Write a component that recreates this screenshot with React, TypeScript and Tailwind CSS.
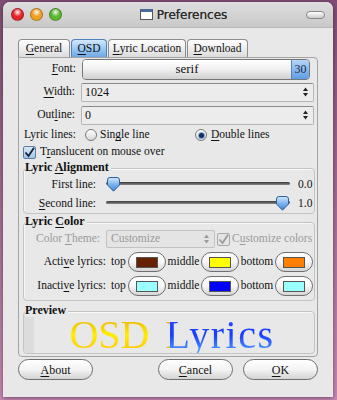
import React from 'react'

const serif = "font-['Liberation_Serif','DejaVu_Serif',serif]"

function U({ children }: { children: React.ReactNode }) {
  return <span className="underline underline-offset-2 decoration-1">{children}</span>
}

function SpinArrows({ color = '#222' }: { color?: string }) {
  return (
    <svg width="7" height="12" viewBox="0 0 7 12" className="shrink-0">
      <path d="M3.5 1.5 L6 5 H1 Z" fill={color} />
      <path d="M3.5 10.5 L6 7 H1 Z" fill={color} />
    </svg>
  )
}

function Entry({ value }: { value: string }) {
  return (
    <div className="flex items-center w-[233px] h-[19px] border border-[#b5b5b5] border-t-[#8a8a8a] rounded-[2px] bg-[#ececec] pl-[3px] pr-[4px]">
      <span className="flex-1 text-[12px] text-[#111]">{value}</span>
      <SpinArrows />
    </div>
  )
}

function Thumb() {
  return (
    <svg width="15" height="15" viewBox="0 0 15 15" className="shrink-0">
      <defs>
        <linearGradient id="thumbg" x1="0" y1="0" x2="0" y2="1">
          <stop offset="0" stopColor="#d4e8fc" />
          <stop offset="0.5" stopColor="#7db4ee" />
          <stop offset="1" stopColor="#3d86dc" />
        </linearGradient>
      </defs>
      <path d="M1.5 3 Q1.5 0.5 4 0.5 H11 Q13.5 0.5 13.5 3 V8 L7.5 14.2 L1.5 8 Z" fill="url(#thumbg)" stroke="#2f5f9a" strokeWidth="1" />
    </svg>
  )
}

function Slider({ pos }: { pos: 'start' | 'end' }) {
  return (
    <div className={`relative w-[184px] h-[15px] flex items-center ${pos === 'start' ? 'justify-start' : 'justify-end'}`}>
      <div className="absolute left-0 right-0 top-[5px] h-[3px] rounded-full bg-gradient-to-b from-[#3a3a3a] to-[#8a8a8a]" />
      <div className="relative">
        <Thumb />
      </div>
    </div>
  )
}

function ColorButton({ color }: { color: string }) {
  return (
    <div className="w-[38px] h-[20px] rounded-full border border-[#6f6f6f] bg-gradient-to-b from-white via-[#f6f6f6] to-[#d6d6d6] flex items-center justify-center shrink-0">
      <div className="w-[22px] h-[11px] border border-[#555]" style={{ backgroundColor: color }} />
    </div>
  )
}

function Radio({ checked }: { checked?: boolean }) {
  return (
    <div className="w-[12px] h-[12px] rounded-full border border-[#7a7a7a] bg-gradient-to-b from-white to-[#d8d8d8] flex items-center justify-center shrink-0">
      {checked && <div className="w-[5px] h-[5px] rounded-full bg-[#1a2f55] ring-1 ring-[#7aa8e0]" />}
    </div>
  )
}

function Check({ disabled }: { disabled?: boolean }) {
  return (
    <div
      className={`w-[13px] h-[13px] border rounded-[2px] flex items-center justify-center shrink-0 ${
        disabled ? 'border-[#a8a8a8] bg-[#e4e4e4]' : 'border-[#5e7c9e] bg-gradient-to-b from-[#d8e8f8] to-[#a3c4e6]'
      }`}
    >
      <svg width="11" height="11" viewBox="0 0 11 11">
        <path d="M1.5 5.5 L4.5 9 L10 0.8" fill="none" stroke={disabled ? '#9a9a9a' : '#10223a'} strokeWidth="1.8" />
      </svg>
    </div>
  )
}

function PillButton({ children }: { children: React.ReactNode }) {
  return (
    <div className="w-[75px] h-[21px] rounded-full border border-[#6e6e6e] bg-gradient-to-b from-white via-[#f4f4f4] to-[#d4d4d4] flex items-center justify-center text-[12px] text-[#111]">
      {children}
    </div>
  )
}

function Group({ label, children, className = '' }: { label: React.ReactNode; children: React.ReactNode; className?: string }) {
  return (
    <div className={`relative ${className}`}>
      <div className="border border-[#c4c4c4] rounded-[4px] shadow-[inset_1px_1px_0_#f8f8f8] h-full overflow-hidden">{children}</div>
      <div className="absolute left-[2px] top-[-8px] bg-[#e8e8e8] pr-[2px] text-[12px] font-bold text-[#111] leading-[14px]">
        {label}
      </div>
    </div>
  )
}

function ColorRow({ label, colors }: { label: React.ReactNode; colors: string[] }) {
  return (
    <div className="flex items-center h-[24px] whitespace-nowrap">
      <div className="w-[82px] text-right">{label}</div>
      <div className="ml-[5px] w-[17px]">top</div>
      <ColorButton color={colors[0]} />
      <div className="w-[35px] text-center">middle</div>
      <ColorButton color={colors[1]} />
      <div className="w-[36px] text-center">bottom</div>
      <ColorButton color={colors[2]} />
    </div>
  )
}

export default function App() {
  const tabs = [
    { label: <><U>G</U>eneral</>, w: 'w-[52px]' },
    { label: <><U>O</U>SD</>, w: 'w-[36px]', active: true },
    { label: <><U>L</U>yric Location</>, w: 'w-[78px]' },
    { label: <><U>D</U>ownload</>, w: 'w-[61px]' },
  ]

  return (
    <div className={`w-[337px] h-[400px] overflow-hidden bg-gradient-to-b from-[#7e4c74] via-[#a16a94] to-[#c786b4] pt-[2px] pl-[3px] ${serif}`}>
      <div className="w-[330px] h-[395px] rounded-t-[7px] bg-[#e8e8e8] shadow-[0_1px_4px_rgba(0,0,0,0.45)] flex flex-col overflow-hidden">
        {/* title bar */}
        <div className="h-[26px] shrink-0 flex items-center bg-gradient-to-b from-[#dedede] to-[#c9c9c9] pl-[8px] pr-[8px] border-b border-[#b8b8b8]">
          <div className="flex gap-[6px] w-[60px]">
            {['#e4252a', '#f0a020', '#5cb82e'].map((c) => (
              <div
                key={c}
                className="w-[13px] h-[13px] rounded-full border border-black/30"
                style={{ background: `radial-gradient(circle at 50% 30%, #ffffffcc 0, ${c} 45%, ${c} 100%)` }}
              />
            ))}
          </div>
          <div className="flex-1 flex items-center justify-center gap-[4px] pr-[10px] font-['DejaVu_Sans',sans-serif] text-[12px] text-[#2e2e2e]">
            <div className="w-[13px] h-[11px] border border-[#555] bg-white border-t-[3px] border-t-[#4a6a9a]" />
            <span className="[text-shadow:0_0_0.4px_#2e2e2e]">Preferences</span>
          </div>
          <div className="w-[19px] h-[8px] rounded-full border border-[#888] bg-gradient-to-b from-white to-[#ccc]" />
        </div>

        {/* tabs */}
        <div className="mt-[11px] ml-[15px] flex items-end gap-[1px] h-[18px]">
          {tabs.map((t, i) => (
            <div
              key={i}
              className={`${t.w} h-[18px] rounded-t-[4px] border border-b-0 flex items-center justify-center text-[11.5px] text-[#111] ${
                t.active
                  ? 'border-[#4f82bd] bg-gradient-to-b from-[#d2e8fc] via-[#9cc8f2] to-[#6ea8e6]'
                  : 'border-[#8e8e8e] bg-gradient-to-b from-white to-[#dcdcdc]'
              }`}
            >
              {t.label}
            </div>
          ))}
        </div>

        {/* panel */}
        <div className="ml-[15px] w-[300px] h-[300px] border border-[#a4a4a4] rounded-b-[4px] rounded-tr-[4px] px-[3px] text-[11.5px] text-[#111] whitespace-nowrap">
          <div className="flex items-center h-[22px]">
            <div className="w-[54px] text-right"><U>F</U>ont:</div>
            <div className="ml-[6px] w-[228px] h-[21px] rounded-[4px] border border-[#777] flex overflow-hidden">
              <div className="flex-1 flex items-center justify-center bg-gradient-to-b from-white via-[#f0f0f0] to-[#d0d0d0] text-[13px]">serif</div>
              <div className="w-[18px] flex items-center justify-center bg-gradient-to-b from-[#b5d6f8] to-[#5d9de4] border-l border-[#5683b8] text-[12px] text-[#1a2a44]">30</div>
            </div>
          </div>
          <div className="flex items-center h-[24px]">
            <div className="w-[54px] text-right"><U>W</U>idth:</div>
            <div className="ml-[6px]"><Entry value="1024" /></div>
          </div>
          <div className="flex items-center h-[22px]">
            <div className="w-[54px] text-right">Out<U>l</U>ine:</div>
            <div className="ml-[6px]"><Entry value="0" /></div>
          </div>
          <div className="flex items-center h-[18px]">
            <div className="w-[54px] text-right">Lyric lines:</div>
            <div className="ml-[9px] w-[110px] flex items-center gap-[3px]">
              <Radio />
              <span>Sin<U>g</U>le line</span>
            </div>
            <div className="flex items-center gap-[4px]">
              <Radio checked />
              <span><U>D</U>ouble lines</span>
            </div>
          </div>
          <div className="flex items-center h-[16px] gap-[4px] pl-[1px]">
            <Check />
            <span>T<U>r</U>anslucent on mouse over</span>
          </div>

          <Group label={<>Lyric <U>A</U>lignment</>} className="mt-[8px] ml-[1px] w-[292px] h-[46px]">
            <div className="flex items-center h-[19px] mt-[6px]">
              <div className="w-[72px] text-right">First line:</div>
              <div className="ml-[10px]"><Slider pos="start" /></div>
              <div className="ml-[8px]">0.0</div>
            </div>
            <div className="flex items-center h-[19px]">
              <div className="w-[72px] text-right"><U>S</U>econd line:</div>
              <div className="ml-[10px]"><Slider pos="end" /></div>
              <div className="ml-[8px]">1.0</div>
            </div>
          </Group>

          <Group label={<>Lyric <U>C</U>olor</>} className="mt-[8px] ml-[1px] w-[292px] h-[79px]">
            <div className="flex items-center h-[20px] mt-[6px] text-[#9a9a9a]">
              <div className="w-[76px] text-right">Color <U>T</U>heme:</div>
              <div className="ml-[6px] w-[109px] h-[18px] border border-[#c2c2c2] rounded-[2px] bg-[#e4e4e4] flex items-center pl-[4px] pr-[4px]">
                <span className="flex-1">Customize</span>
                <SpinArrows color="#9a9a9a" />
              </div>
              <div className="ml-[2px] flex items-center gap-[2px]">
                <Check disabled />
                <span>C<U>u</U>stomize colors</span>
              </div>
            </div>
            <div className="mt-[1px]">
              <ColorRow label={<>Acti<U>v</U>e lyrics:</>} colors={['#662200', '#ffff00', '#ff8000']} />
              <ColorRow label={<>Inacti<U>v</U>e lyrics:</>} colors={['#99ffff', '#0000ff', '#99ffff']} />
            </div>
          </Group>

          <Group label="Preview" className="mt-[10px] ml-[1px] w-[292px] h-[43px]">
            <div className="flex h-full">
              <div className="w-[10px] bg-[#dcdcdc] mt-[2px]" />
              <div className="flex-1 flex justify-center pt-[3px] pr-[4px]">
                <div className="text-[40px] leading-[40px]">
                  <span className="inline-block bg-gradient-to-b from-[#e8a800] via-[#ffee00] to-[#ffbb00] bg-clip-text text-transparent">OSD</span>
                  <span className="inline-block ml-[16px] tracking-[1.5px] bg-[linear-gradient(to_right,#ffc400_0,#ffc400_4px,transparent_4px),linear-gradient(to_bottom,#2a4cff,#1a3cff_50%,#55b0ff)] bg-clip-text text-transparent">
                    Lyrics
                  </span>
                </div>
              </div>
            </div>
          </Group>
        </div>

        {/* buttons */}
        <div className="mt-[2px] ml-[15px] w-[300px] flex items-center">
          <PillButton><U>A</U>bout</PillButton>
          <div className="flex-1" />
          <PillButton><U>C</U>ancel</PillButton>
          <div className="w-[10px]" />
          <PillButton><U>O</U>K</PillButton>
        </div>
      </div>
    </div>
  )
}
